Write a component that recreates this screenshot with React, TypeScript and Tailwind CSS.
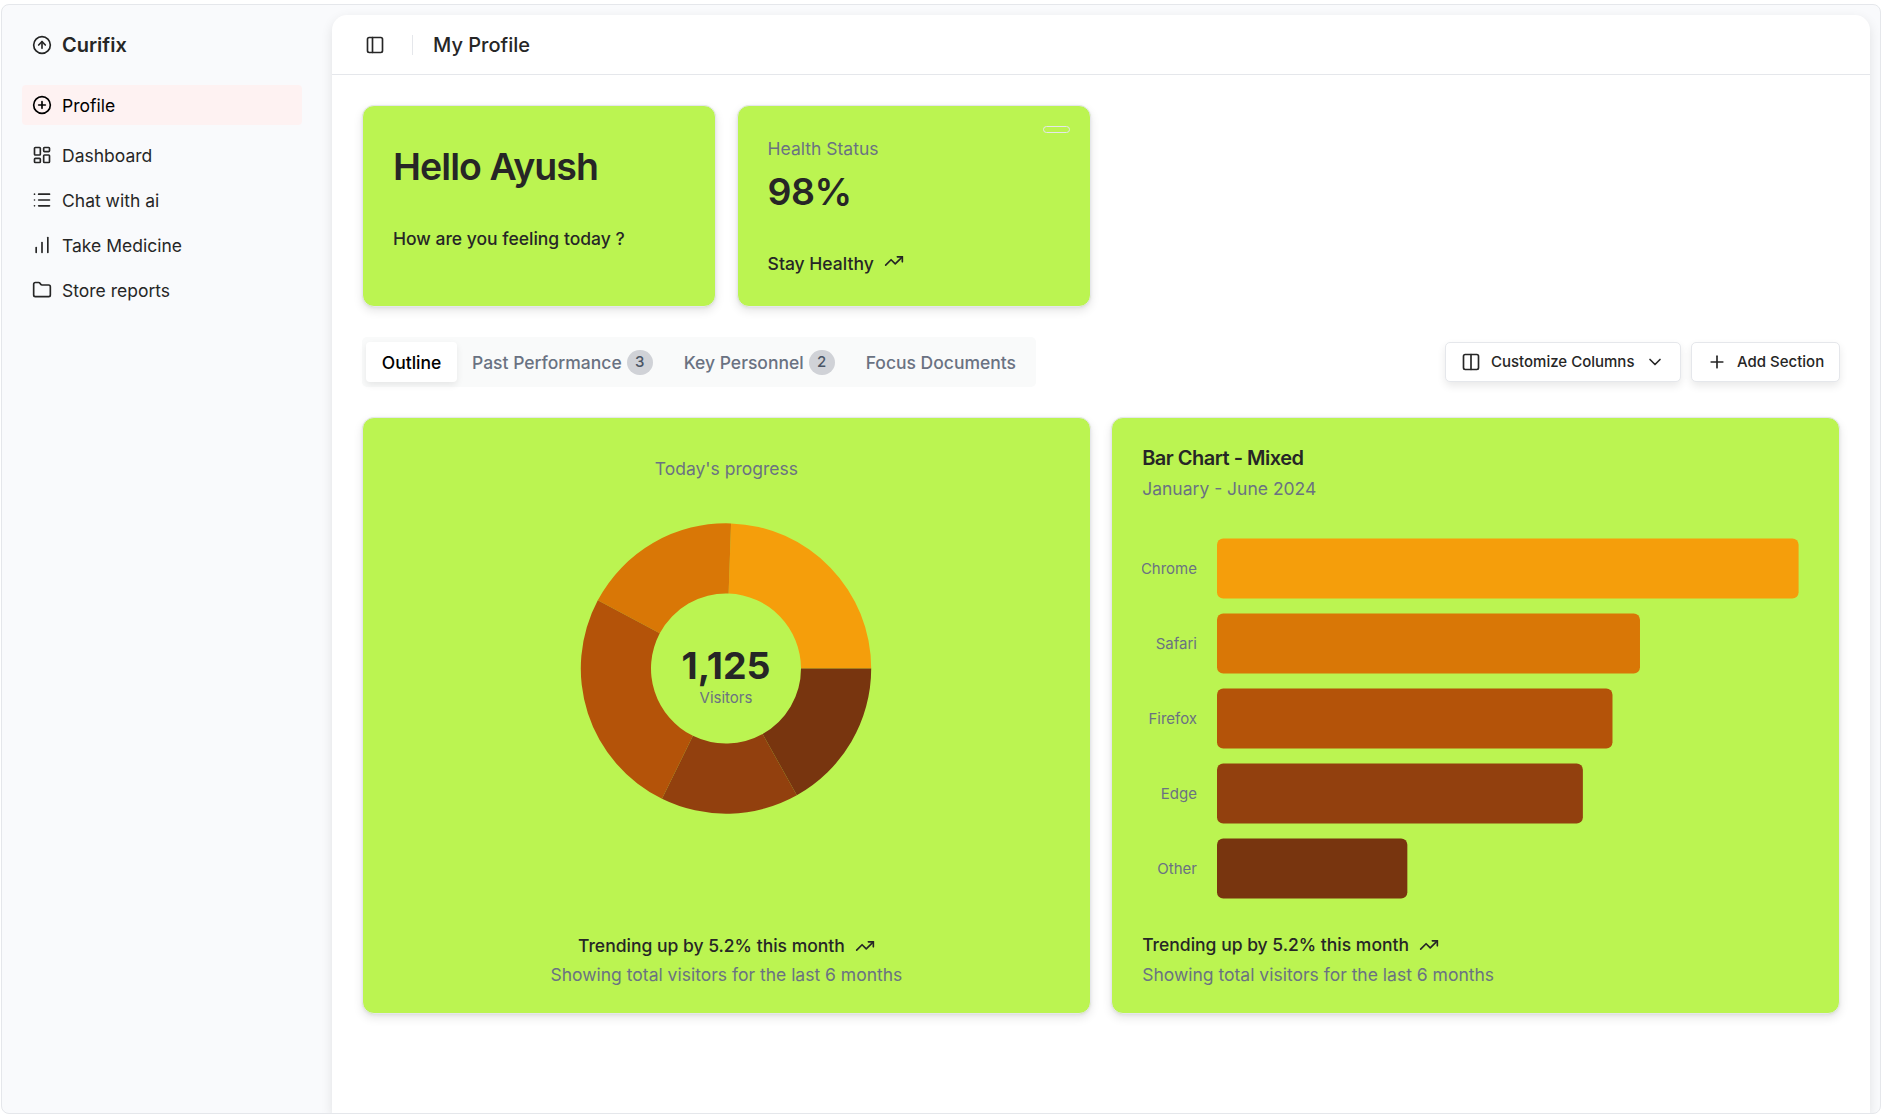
import type { ComponentType, ReactNode } from "react";
import {
  ChartNoAxesColumnIncreasing,
  ChevronDown,
  CircleArrowUp,
  CirclePlus,
  Columns2,
  Folder,
  LayoutDashboard,
  List,
  PanelLeft,
  Plus,
  TrendingUp,
} from "lucide-react";

type IconType = ComponentType<{ className?: string; strokeWidth?: number }>;

const navItems: { label: string; icon: IconType }[] = [
  { label: "Dashboard", icon: LayoutDashboard },
  { label: "Chat with ai", icon: List },
  { label: "Take Medicine", icon: ChartNoAxesColumnIncreasing },
  { label: "Store reports", icon: Folder },
];

const slices = [
  { value: 275, color: "#f59e0b" },
  { value: 200, color: "#d97706" },
  { value: 287, color: "#b45309" },
  { value: 173, color: "#92400e" },
  { value: 190, color: "#78350f" },
];

const bars = [
  { label: "Chrome", value: 275, color: "#f59e0b" },
  { label: "Safari", value: 200, color: "#d97706" },
  { label: "Firefox", value: 187, color: "#b45309" },
  { label: "Edge", value: 173, color: "#92400e" },
  { label: "Other", value: 90, color: "#78350f" },
];

function Card({ className, children }: { className: string; children: ReactNode }) {
  return (
    <div
      className={`rounded-[12px] border border-gray-200 bg-[#bbf451] shadow-[0_4px_10px_rgba(0,0,0,0.1),0_1px_3px_rgba(0,0,0,0.06)] ${className}`}
    >
      {children}
    </div>
  );
}

function Sidebar() {
  return (
    <aside className="w-[330px] shrink-0 pr-[30px] pl-5">
      <div className="mt-5 flex h-10 items-center gap-2.5 px-2.5">
        <CircleArrowUp className="size-5" strokeWidth={2} />
        <span className="text-[20px] leading-[25px] font-semibold">Curifix</span>
      </div>
      <nav className="mt-5 text-[17.5px] leading-[25px]">
        <div className="flex h-10 items-center gap-2.5 rounded-[4px] bg-red-50 px-2.5 text-black">
          <CirclePlus className="size-5" strokeWidth={2} />
          <span>Profile</span>
        </div>
        <ul className="mt-2.5 flex flex-col gap-[5px]">
          {navItems.map(({ label, icon: Icon }) => (
            <li key={label} className="flex h-10 items-center gap-2.5 px-2.5">
              <Icon className="size-5" strokeWidth={2} />
              <span>{label}</span>
            </li>
          ))}
        </ul>
      </nav>
    </aside>
  );
}

function point(r: number, turn: number) {
  const a = turn * 2 * Math.PI;
  return `${(Math.cos(a) * r).toFixed(3)} ${(-Math.sin(a) * r).toFixed(3)}`;
}

function Donut() {
  const total = slices.reduce((sum, s) => sum + s.value, 0);
  let start = 0;
  return (
    <svg className="block h-[292px] w-[292px]" viewBox="-146 -146.5 292 292">
      {slices.map((s) => {
        const from = start / total;
        start += s.value;
        const to = start / total;
        return (
          <path
            key={s.color}
            fill={s.color}
            d={`M${point(145.2, from)}A145.2 145.2 0 0 0 ${point(145.2, to)}L${point(75, to)}A75 75 0 0 1 ${point(75, from)}Z`}
          />
        );
      })}
      <text textAnchor="middle" y="10.5" className="fill-[#262626] text-[37.5px] font-bold">
        1,125
      </text>
      <text textAnchor="middle" y="34.4" className="fill-gray-500 text-[15px]">
        Visitors
      </text>
    </svg>
  );
}

function BarChart() {
  return (
    <svg className="block h-[375px] w-[667px]" viewBox="0 0 667 375">
      {bars.map((b, i) => (
        <g key={b.label}>
          <text x="55" y={43 + i * 75} textAnchor="end" className="fill-gray-500 text-[15px]">
            {b.label}
          </text>
          <rect x="75" y={7.5 + i * 75} width={(b.value / 275) * 581.6} height="60" rx="6.25" fill={b.color} />
        </g>
      ))}
    </svg>
  );
}

function Count({ children }: { children: ReactNode }) {
  return (
    <span className="flex h-[25px] w-[26px] items-center justify-center rounded-full bg-[#d0d2d7] text-[15px] leading-5 font-medium text-gray-600">
      {children}
    </span>
  );
}

function Tabs() {
  return (
    <div className="flex h-[50px] w-[674px] items-center rounded-[5px] bg-[#f9fafa] pl-1 text-[17.5px] leading-[25px] font-medium text-gray-500">
      <div className="flex h-10 w-[91px] items-center justify-center rounded-[4px] bg-white text-black shadow-[0_3px_7px_rgba(0,0,0,0.08)]">
        Outline
      </div>
      <div className="ml-[15px] flex items-center gap-[5px]">
        Past Performance <Count>3</Count>
      </div>
      <div className="ml-[31px] flex items-center gap-[5px]">
        Key Personnel <Count>2</Count>
      </div>
      <div className="ml-[31px]">Focus Documents</div>
    </div>
  );
}

function Toolbar() {
  const button =
    "flex h-10 items-center rounded-[5px] border border-gray-200 bg-white text-[15px] leading-5 font-medium shadow-[0_4px_8px_rgba(0,0,0,0.09)]";
  return (
    <div className="mt-[30px] flex h-[50px] items-center justify-between">
      <Tabs />
      <div className="flex gap-2.5">
        <button className={`${button} w-[236px] pl-[15px]`}>
          <Columns2 className="size-5" strokeWidth={2} />
          <span className="ml-2.5">Customize Columns</span>
          <ChevronDown className="ml-[11px] size-5" strokeWidth={2} />
        </button>
        <button className={`${button} w-[149px] pl-[15px]`}>
          <Plus className="size-5" strokeWidth={2} />
          <span className="ml-2.5">Add Section</span>
        </button>
      </div>
    </div>
  );
}

export default function App() {
  return (
    <div className="h-[1116px] w-[1882px] bg-white pt-1 pl-px font-['Inter',sans-serif] text-[#262626]">
      <div className="flex h-[1110px] w-[1880px] overflow-hidden rounded-[8px] border border-gray-200 bg-[#f9fafc]">
        <Sidebar />
        <main className="mt-2.5 w-[1538px] rounded-t-[15px] bg-white shadow-[0_4px_12px_rgba(0,0,0,0.1)]">
          <header className="flex h-[60px] items-center border-b border-gray-200 pl-[33px]">
            <PanelLeft className="size-5" strokeWidth={2} />
            <div className="ml-[27px] h-5 w-px bg-gray-200" />
            <h1 className="mt-px ml-5 text-[20px] leading-[26px] font-medium">My Profile</h1>
          </header>
          <div className="px-[30px] pt-[30px]">
            <div className="grid grid-cols-4 gap-[20.4px]">
              <Card className="h-[202px] px-[30px] pt-[37px]">
                <h2 className="text-[37.5px] leading-[47px] font-semibold tracking-[-0.025em]">Hello Ayush</h2>
                <p className="mt-9 text-[17.5px] leading-[25px] font-medium">How are you feeling today ?</p>
              </Card>
              <Card className="relative h-[202px] px-[30px] pt-[30px]">
                <div className="absolute top-5 right-5 h-[7px] w-[27px] rounded-full border border-gray-200" />
                <p className="text-[17.5px] leading-[25px] text-gray-500">Health Status</p>
                <p className="mt-2 text-[37.5px] leading-[45px] font-semibold tracking-[-0.015em]">98%</p>
                <div className="mt-[37px] flex gap-2.5 text-[17.5px] leading-[25px] font-medium">
                  Stay Healthy <TrendingUp className="size-5" strokeWidth={2} />
                </div>
              </Card>
            </div>
            <Toolbar />
            <div className="mt-[30px] grid grid-cols-2 gap-[20.4px] text-[17.5px] leading-[25px]">
              <Card className="flex h-[597px] flex-col items-center pt-[38px]">
                <p className="text-gray-500">Today's progress</p>
                <div className="mt-[41px]">
                  <Donut />
                </div>
                <div className="mt-[119px] flex items-center gap-2.5 font-medium">
                  Trending up by 5.2% this month <TrendingUp className="size-5" strokeWidth={2} />
                </div>
                <p className="mt-1 text-gray-500">Showing total visitors for the last 6 months</p>
              </Card>
              <Card className="h-[597px] px-[30px] pt-[28px]">
                <h2 className="text-[20px] leading-[25px] font-semibold tracking-[-0.025em]">Bar Chart - Mixed</h2>
                <p className="mt-[5px] text-gray-500">January - June 2024</p>
                <div className="mt-[30px]">
                  <BarChart />
                </div>
                <div className="mt-[26px] flex items-center gap-2.5 font-medium">
                  Trending up by 5.2% this month <TrendingUp className="size-5" strokeWidth={2} />
                </div>
                <p className="mt-[5px] text-gray-500">Showing total visitors for the last 6 months</p>
              </Card>
            </div>
          </div>
        </main>
      </div>
    </div>
  );
}
